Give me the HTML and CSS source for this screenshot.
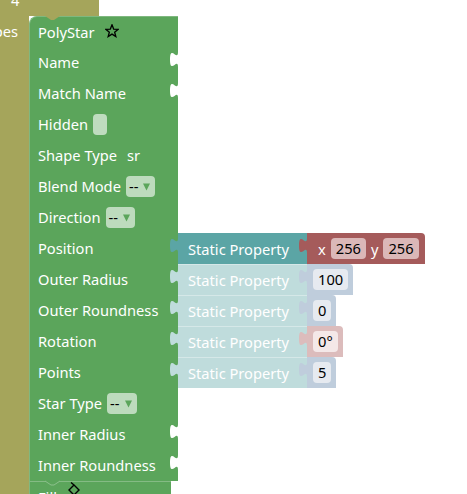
FILE: index.html
```html
<!DOCTYPE html>
<html>
<head>
<meta charset="utf-8">
<link rel="stylesheet" href="styles.css">
</head>
<body>
<div class="shapes">
  <div class="shapes-top"><span class="count">4</span></div>
  <div class="shapes-body">
    <div class="arm"><span class="arm-label">Shapes</span></div>
    <div class="stack">
      <div class="poly">
        <div class="row">
          <div class="cell first">PolyStar
            <svg class="star" viewBox="0 0 14 14"><polygon points="7,0.8 8.65,5.03 13.18,5.29 9.66,8.17 10.82,12.56 7,10.1 3.18,12.56 4.34,8.17 0.82,5.29 5.35,5.03"/></svg>
            <svg class="notch-top" viewBox="0 0 15 4"><path d="M0,0 L6,4 L9,4 L15,0 Z"/></svg>
          </div>
        </div>
        <div class="row"><div class="cell">Name<svg class="socket" viewBox="0 0 8 15"><path d="M8,0 C8,10 0,-8 0,7.5 C0,23 8,5 8,15 Z"/></svg></div></div>
        <div class="row"><div class="cell">Match Name<svg class="socket" viewBox="0 0 8 15"><path d="M8,0 C8,10 0,-8 0,7.5 C0,23 8,5 8,15 Z"/></svg></div></div>
        <div class="row"><div class="cell">Hidden<span class="check"></span></div></div>
        <div class="row"><div class="cell">Shape Type<span class="lbl">sr</span></div></div>
        <div class="row"><div class="cell">Blend Mode<span class="dd">--<svg class="tri" viewBox="0 0 7 8"><path d="M0,0.5 L7,0.5 L3.5,7.5 Z"/></svg></span></div></div>
        <div class="row"><div class="cell">Direction<span class="dd">--<svg class="tri" viewBox="0 0 7 8"><path d="M0,0.5 L7,0.5 L3.5,7.5 Z"/></svg></span></div></div>
        <div class="row">
          <div class="cell">Position</div>
          <div class="vb sp teal">Static Property<svg class="tab" viewBox="0 0 8 15"><path d="M8,0 C8,10 0,-8 0,7.5 C0,23 8,5 8,15 Z"/></svg></div>
          <div class="vb num red"><span>x</span><span class="fld">256</span><span>y</span><span class="fld">256</span><svg class="tab" viewBox="0 0 8 15"><path d="M8,0 C8,10 0,-8 0,7.5 C0,23 8,5 8,15 Z"/></svg></div>
        </div>
        <div class="row">
          <div class="cell">Outer Radius</div>
          <div class="vb sp faded">Static Property<svg class="tab" viewBox="0 0 8 15"><path d="M8,0 C8,10 0,-8 0,7.5 C0,23 8,5 8,15 Z"/></svg></div>
          <div class="vb num blue"><span class="fld">100</span><svg class="tab" viewBox="0 0 8 15"><path d="M8,0 C8,10 0,-8 0,7.5 C0,23 8,5 8,15 Z"/></svg></div>
        </div>
        <div class="row">
          <div class="cell">Outer Roundness</div>
          <div class="vb sp faded">Static Property<svg class="tab" viewBox="0 0 8 15"><path d="M8,0 C8,10 0,-8 0,7.5 C0,23 8,5 8,15 Z"/></svg></div>
          <div class="vb num blue"><span class="fld">0</span><svg class="tab" viewBox="0 0 8 15"><path d="M8,0 C8,10 0,-8 0,7.5 C0,23 8,5 8,15 Z"/></svg></div>
        </div>
        <div class="row">
          <div class="cell">Rotation</div>
          <div class="vb sp faded">Static Property<svg class="tab" viewBox="0 0 8 15"><path d="M8,0 C8,10 0,-8 0,7.5 C0,23 8,5 8,15 Z"/></svg></div>
          <div class="vb num pink"><span class="fld">0°</span><svg class="tab" viewBox="0 0 8 15"><path d="M8,0 C8,10 0,-8 0,7.5 C0,23 8,5 8,15 Z"/></svg></div>
        </div>
        <div class="row">
          <div class="cell">Points</div>
          <div class="vb sp faded">Static Property<svg class="tab" viewBox="0 0 8 15"><path d="M8,0 C8,10 0,-8 0,7.5 C0,23 8,5 8,15 Z"/></svg></div>
          <div class="vb num blue"><span class="fld">5</span><svg class="tab" viewBox="0 0 8 15"><path d="M8,0 C8,10 0,-8 0,7.5 C0,23 8,5 8,15 Z"/></svg></div>
        </div>
        <div class="row"><div class="cell">Star Type<span class="dd">--<svg class="tri" viewBox="0 0 7 8"><path d="M0,0.5 L7,0.5 L3.5,7.5 Z"/></svg></span></div></div>
        <div class="row"><div class="cell">Inner Radius<svg class="socket" viewBox="0 0 8 15"><path d="M8,0 C8,10 0,-8 0,7.5 C0,23 8,5 8,15 Z"/></svg></div></div>
        <div class="row"><div class="cell">Inner Roundness<svg class="socket" viewBox="0 0 8 15"><path d="M8,0 C8,10 0,-8 0,7.5 C0,23 8,5 8,15 Z"/></svg></div></div>
      </div>
      <div class="fill">Fill
        <svg class="bucket" viewBox="0 0 16 16"><path d="M3,8 L8,3 L13,8 L8,13 Z M8,3 L5,0.5"/></svg>
        <svg class="notch-bottom" viewBox="0 0 15 4"><path d="M0,0 L6,4 L9,4 L15,0"/></svg>
      </div>
    </div>
  </div>
</div>
</body>
</html>
```

FILE: styles.css
```css
* { box-sizing: border-box; }
html, body { margin: 0; padding: 0; }
body {
  width: 467px;
  height: 494px;
  overflow: hidden;
  background: #ffffff;
  font-family: "Noto Sans", "Open Sans", sans-serif;
  font-size: 14.667px;
  color: #ffffff;
}
.shapes { display: flex; flex-direction: column; }
.shapes-top {
  width: 99px;
  height: 16px;
  background: #a5a55b;
  overflow: hidden;
}
.count {
  display: block;
  line-height: 31px;
  margin-top: -15px;
  padding-left: 11px;
}
.shapes-body { display: flex; }
.arm {
  width: 29px;
  flex: none;
  background: #a5a55b;
  display: flex;
  justify-content: flex-end;
  align-items: flex-start;
  overflow: hidden;
}
.arm-label {
  line-height: 31px;
  padding-right: 11px;
  white-space: nowrap;
}
.stack { display: flex; flex-direction: column; }
.poly { display: flex; flex-direction: column; }
.row { display: flex; height: 31px; }
.cell {
  width: 149px;
  flex: none;
  height: 31px;
  background: #5ba55b;
  border-left: 1px solid #7fb87f;
  padding-left: 8px;
  display: flex;
  align-items: center;
  line-height: 31px;
  white-space: nowrap;
  position: relative;
}
.cell.first {
  border-top-left-radius: 8px;
  border-top: 1px solid #7fb87f;
}
.star {
  width: 14px;
  height: 14px;
  margin-left: 10px;
  margin-top: -2px;
  fill: none;
  stroke: #000;
  stroke-width: 1.3;
  stroke-linejoin: miter;
}
.notch-top {
  position: absolute;
  left: 15px;
  top: -1px;
  width: 15px;
  height: 4px;
  fill: #a5a55b;
}
.socket {
  position: absolute;
  right: 0;
  top: 5px;
  width: 8px;
  height: 15px;
  overflow: visible;
  fill: #ffffff;
}
.check {
  width: 14px;
  height: 21px;
  margin-left: 5px;
  border-radius: 4px;
  background: #bfdcbf;
}
.lbl { margin-left: 10px; }
.dd {
  display: flex;
  align-items: center;
  height: 21px;
  margin-left: 5px;
  padding: 0 5px 0 3px;
  border-radius: 4px;
  background: #bddbbd;
  color: #000;
  line-height: 21px;
}
.tri {
  width: 7px;
  height: 8px;
  margin-left: 5px;
  fill: #5ba55b;
}
.vb {
  height: 31px;
  flex: none;
  display: flex;
  align-items: center;
  position: relative;
  white-space: nowrap;
}
.tab {
  position: absolute;
  left: -8px;
  top: 5px;
  width: 8px;
  height: 15px;
  overflow: visible;
}
.sp {
  width: 129px;
  padding-left: 10px;
}
.teal { background: #5ba5a5; }
.teal .tab { fill: #5ba5a5; }
.faded {
  background: #bfdcdc;
  box-shadow: inset 0 1px 0 rgba(255, 255, 255, 0.35);
}
.faded .tab { fill: #bfdcdc; }
.num {
  gap: 5px;
  padding: 0 5px 0 6px;
  border-top-right-radius: 4px;
}
.red {
  background: #a55b5b;
  padding: 0 6px 0 11px;
}
.red .tab { fill: #a55b5b; }
.blue { background: #bfcddc; }
.blue .tab { fill: #bfcddc; }
.pink { background: #dcbcbc; }
.pink .tab { fill: #dcbcbc; }
.fld {
  height: 21px;
  line-height: 21px;
  padding: 0 5px;
  border-radius: 4px;
  color: #000;
  background: #e6eaf0;
}
.red .fld { background: #dbb8b8; }
.pink .fld { background: #f4e8e8; }
.fill {
  width: 142px;
  height: 31px;
  background: #5ba55b;
  border-top: 1px solid #84bb84;
  border-left: 1px solid #7fb87f;
  padding-left: 8px;
  display: flex;
  align-items: center;
  line-height: 29px;
  position: relative;
}
.bucket {
  width: 16px;
  height: 16px;
  margin-left: 9px;
  margin-top: -14px;
  fill: none;
  stroke: #000;
  stroke-width: 1.4;
}
.notch-bottom {
  position: absolute;
  left: 15px;
  top: -1px;
  width: 15px;
  height: 4px;
  overflow: visible;
  fill: #5ba55b;
  stroke: #8cc08c;
  stroke-width: 1;
}
```
